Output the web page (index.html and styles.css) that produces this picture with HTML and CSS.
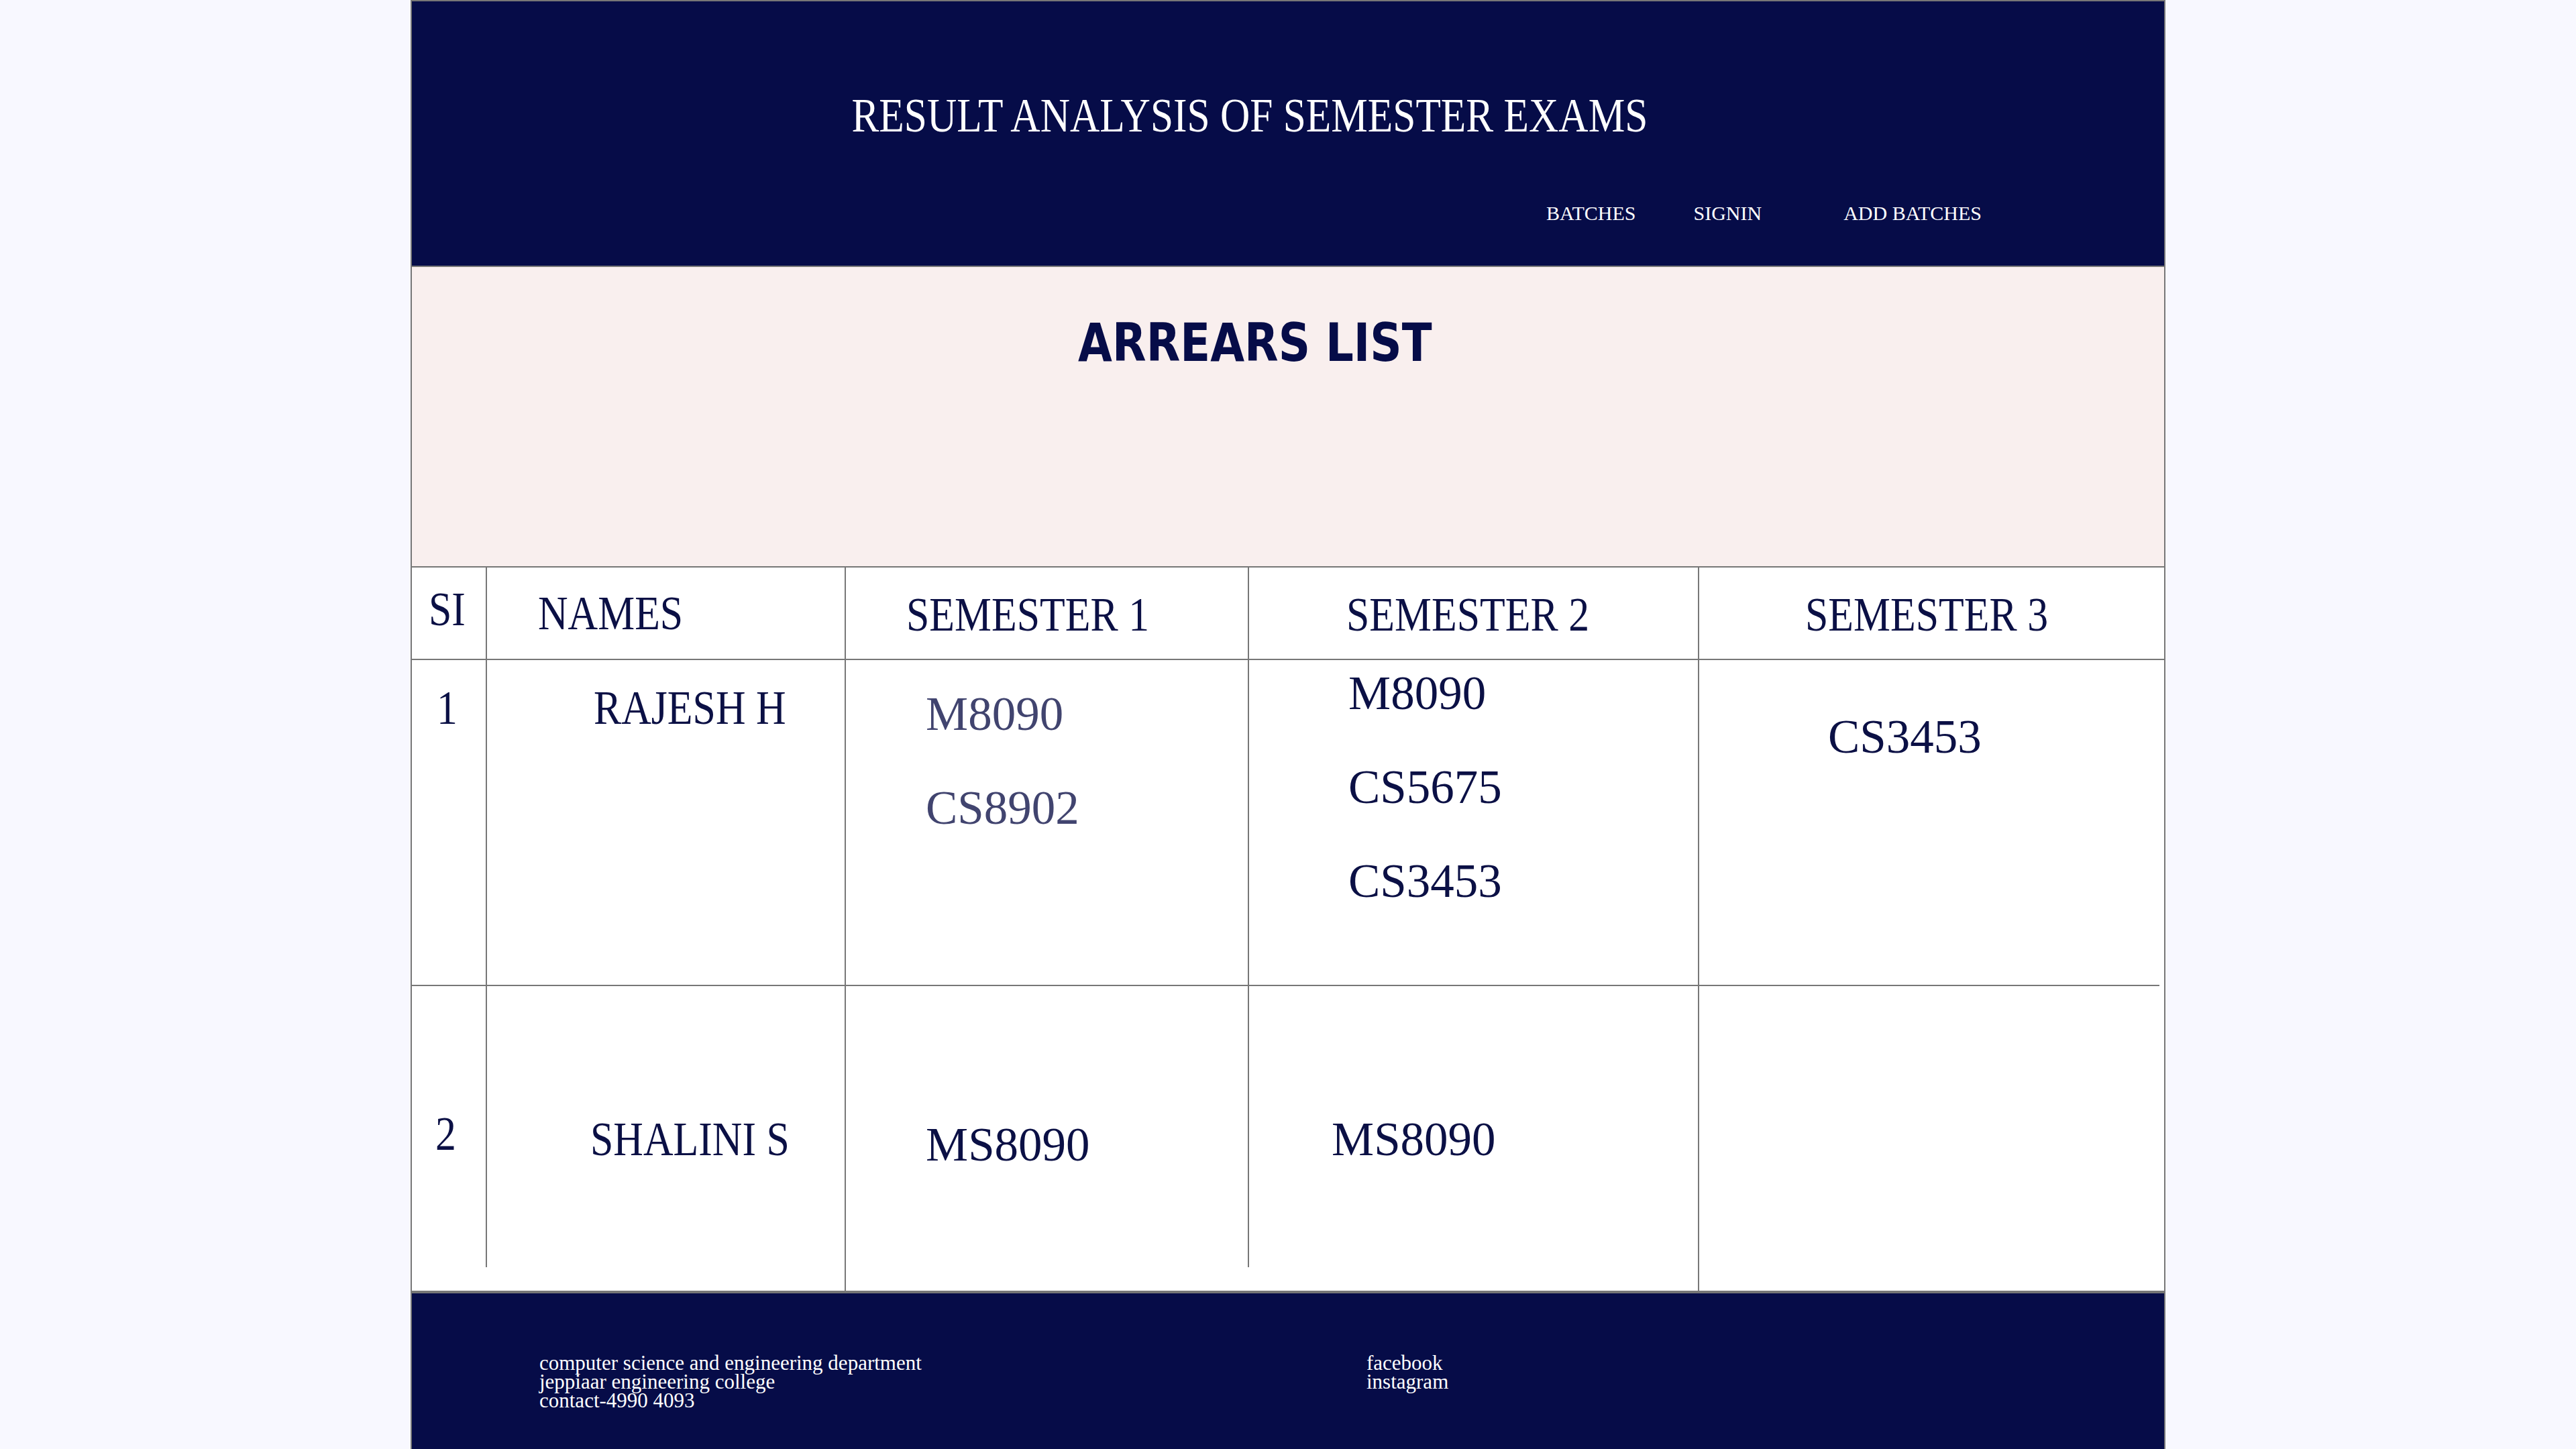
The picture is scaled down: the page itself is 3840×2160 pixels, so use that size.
FILE: index.html
```html
<!DOCTYPE html>
<html lang="en">
<head>
<meta charset="utf-8">
<title>Arrears List</title>
<link rel="stylesheet" href="styles.css">
</head>
<body>
<div class="page">
  <header class="top">
    <h1 class="title"><span class="cond cond-title">RESULT ANALYSIS OF SEMESTER EXAMS</span></h1>
    <nav class="nav">
      <a class="nav-item">BATCHES</a>
      <a class="nav-item">SIGNIN</a>
      <a class="nav-item nav-last">ADD BATCHES</a>
    </nav>
  </header>
  <section class="banner">
    <h2 class="banner-title"><span class="wide-c">ARREARS LIST</span></h2>
  </section>
  <div class="table">
    <div class="cell head h-si"><span class="cond">SI</span></div>
    <div class="cell head h-name"><span class="cond">NAMES</span></div>
    <div class="cell head h-s1"><span class="cond">SEMESTER 1</span></div>
    <div class="cell head h-s2"><span class="cond">SEMESTER 2</span></div>
    <div class="cell head h-s3 last"><span class="cond">SEMESTER 3</span></div>

    <div class="cell row1 r1-si"><span class="cond">1</span></div>
    <div class="cell row1 r1-name"><span class="cond">RAJESH H</span></div>
    <div class="cell row1 r1-s1 codes muted"><p>M8090</p><p>CS8902</p></div>
    <div class="cell row1 r1-s2 codes"><p>M8090</p><p>CS5675</p><p>CS3453</p></div>
    <div class="cell row1 r1-s3 codes last"><p>CS3453</p></div>

    <div class="cell row2 short r2-si"><span class="cond">2</span></div>
    <div class="cell row2 r2-name"><span class="cond">SHALINI S</span></div>
    <div class="cell row2 short r2-s1 codes"><p>MS8090</p></div>
    <div class="cell row2 r2-s2 codes"><p>MS8090</p></div>
    <div class="cell row2 last"></div>
  </div>
  <footer class="foot">
    <div class="foot-col foot-main">
      <div>computer science and engineering department</div>
      <div>jeppiaar engineering college</div>
      <div>contact-4990 4093</div>
    </div>
    <div class="foot-col">
      <div>facebook</div>
      <div>instagram</div>
    </div>
  </footer>
</div>
</body>
</html>
```
FILE: styles.css
```css
* { box-sizing: border-box; }

html, body {
  margin: 0;
  padding: 0;
  background: #f8f8ff;
  font-family: "Liberation Serif", "Times New Roman", serif;
  color: #0b1045;
}

body { overflow: hidden; }

.page {
  width: 2616px;
  margin: 0 auto;
  border: 2px solid #777777;
  border-bottom: none;
  background: #ffffff;
}

.cond {
  display: inline-block;
  transform: scaleX(0.87);
  transform-origin: 0 50%;
  white-space: nowrap;
}

.cond-title {
  transform: scaleX(0.864);
  transform-origin: 50% 50%;
}

/* header */
.top {
  height: 396px;
  background: #060c48;
  border-bottom: 2px solid #777777;
  padding-top: 134.5px;
}

.title {
  margin: 0;
  padding-right: 114px;
  text-align: center;
  font-size: 71px;
  line-height: 71px;
  font-weight: normal;
  color: #ffffff;
}

.nav {
  display: flex;
  justify-content: flex-end;
  gap: 86px;
  margin-top: 95.4px;
  padding-right: 272px;
  font-size: 30px;
  line-height: 30px;
}

.nav-item {
  color: #ffffff;
  text-decoration: none;
  white-space: nowrap;
}

.nav-last { margin-left: 36px; }

/* pink banner */
.banner {
  height: 448px;
  background: #f9efee;
  border-bottom: 2px solid #777777;
  padding-top: 74px;
}

.banner-title {
  margin: 0;
  padding-right: 99px;
  text-align: center;
  font-family: "DejaVu Sans", "Liberation Sans", sans-serif;
  font-weight: bold;
  font-size: 78px;
  line-height: 78px;
  color: #060c48;
}

.wide-c {
  display: inline-block;
  transform: scaleX(0.843);
  transform-origin: 50% 50%;
  white-space: nowrap;
}

/* table */
.table {
  display: grid;
  grid-template-columns: 112px 535px 601px 671px 1fr;
  grid-template-rows: 138px 486px 454px;
  background: #ffffff;
}

.cell {
  border-right: 2px solid #777777;
  font-size: 71px;
  line-height: 71px;
  color: #0b1045;
}

.cell.last { border-right: none; }

.head, .row1 { border-bottom: 2px solid #777777; }

.row1.last { margin-right: 7px; }

.short { margin-bottom: 35px; }

.codes {
  display: flex;
  flex-direction: column;
  gap: 69px;
}

.codes p { margin: 0; white-space: nowrap; }

.muted { color: #41446f; }

.h-si   { padding: 26.5px 0 0 25px; }
.h-name { padding: 32.5px 0 0 76px; }
.h-s1   { padding: 34.5px 0 0 90px; }
.h-s2   { padding: 34.5px 0 0 145px; }
.h-s3   { padding: 34.5px 0 0 158px; }

.r1-si   { padding: 35.5px 0 0 37px; }
.r1-name { padding: 35.5px 0 0 159px; }
.r1-s1   { padding: 44.5px 0 0 119px; }
.r1-s2   { padding: 13.5px 0 0 148px; }
.r1-s3   { padding: 78.5px 0 0 192px; }

.r2-si   { padding: 184.5px 0 0 35px; }
.r2-name { padding: 192.5px 0 0 154px; }
.r2-s1   { padding: 200.5px 0 0 119px; }
.r2-s2   { padding: 192.5px 0 0 123px; }

/* footer */
.foot {
  height: 236px;
  background: #060c48;
  border-top: 4px solid #777777;
  padding: 89.5px 0 0 190px;
  display: flex;
  color: #ffffff;
  font-size: 31px;
  line-height: 28px;
}

.foot-main { width: 1233px; }

.foot-col div { white-space: nowrap; }
```
